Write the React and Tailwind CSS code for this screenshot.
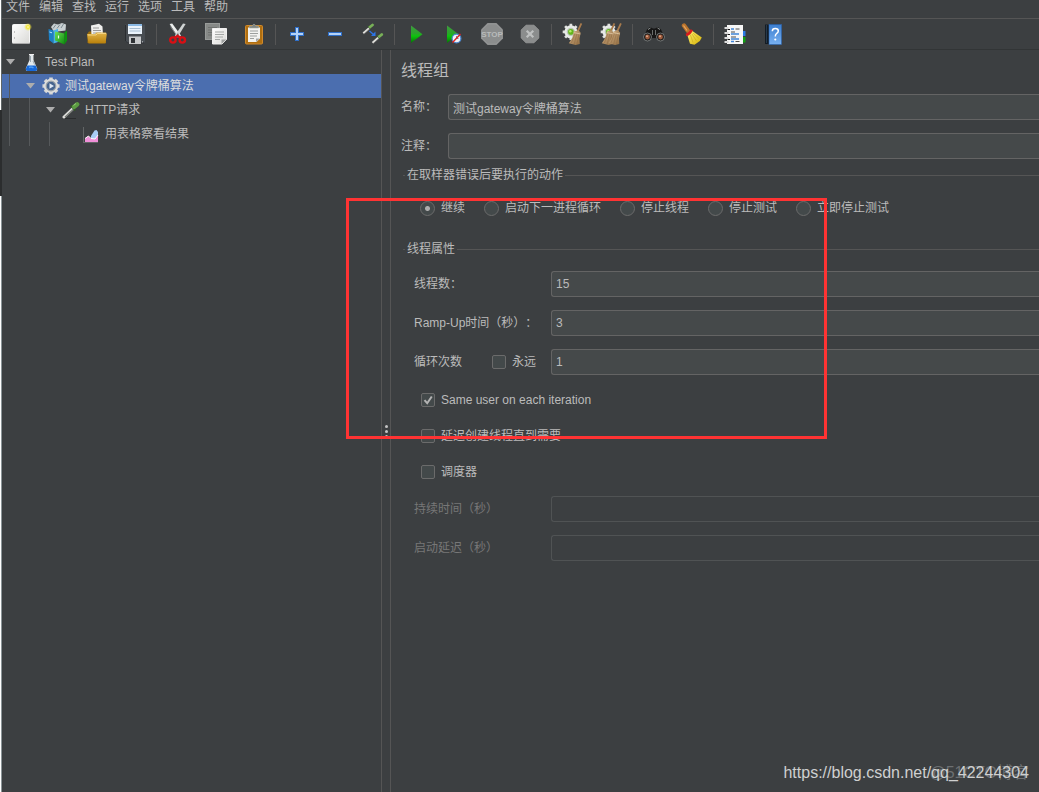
import React from "react";

const menus = ["文件", "编辑", "查找", "运行", "选项", "工具", "帮助"];

function Icon({ children }) {
  return (
    <svg width="22" height="22" viewBox="0 0 22 22" fill="none" aria-hidden="true">
      {children}
    </svg>
  );
}

function Gradients() {
  return (
    <svg width="0" height="0" className="absolute" aria-hidden="true">
      <defs>
        <linearGradient id="paper" x1="0" y1="0" x2="1" y2="1">
          <stop offset="0" stopColor="#ffffff" />
          <stop offset="1" stopColor="#d9d9d6" />
        </linearGradient>
        <linearGradient id="gold" x1="0" y1="0" x2="0" y2="1">
          <stop offset="0" stopColor="#e3b64a" />
          <stop offset="1" stopColor="#b87f0a" />
        </linearGradient>
        <linearGradient id="leaf" x1="0" y1="0" x2="1" y2="1">
          <stop offset="0" stopColor="#6fe05a" />
          <stop offset="1" stopColor="#0b8a0b" />
        </linearGradient>
        <linearGradient id="play" x1="0" y1="0" x2="0" y2="1">
          <stop offset="0" stopColor="#3f9a3f" />
          <stop offset="0.45" stopColor="#2aa52a" />
          <stop offset="0.6" stopColor="#0cc40c" />
          <stop offset="1" stopColor="#087008" />
        </linearGradient>
        <linearGradient id="sky" x1="0" y1="0" x2="0" y2="1">
          <stop offset="0" stopColor="#3c7fd0" />
          <stop offset="1" stopColor="#78b0f0" />
        </linearGradient>
        <linearGradient id="straw" x1="0" y1="0" x2="1" y2="1">
          <stop offset="0" stopColor="#d3b186" />
          <stop offset="1" stopColor="#8f6b40" />
        </linearGradient>
        <linearGradient id="brush" x1="0" y1="0" x2="1" y2="1">
          <stop offset="0" stopColor="#fff27a" />
          <stop offset="1" stopColor="#d4b000" />
        </linearGradient>
        <radialGradient id="glow">
          <stop offset="0" stopColor="#fffbd0" />
          <stop offset="0.35" stopColor="#f5e63c" />
          <stop offset="1" stopColor="#f5e63c" stopOpacity="0" />
        </radialGradient>
      </defs>
    </svg>
  );
}

const gearTeeth = "M11 1.5v19M1.5 11h19M4.3 4.3l13.4 13.4M17.7 4.3L4.3 17.7";

function SmallGear() {
  return (
    <g>
      <g transform="translate(-0.6 -0.6) scale(0.86)">
        <path d={gearTeeth} stroke="#dfe1df" strokeWidth="3.2" />
        <circle cx="11" cy="11" r="7.6" fill="#e8eae8" />
        <circle cx="11" cy="11" r="4.8" fill="#b9c4b4" />
      </g>
      <circle cx="8.9" cy="8.9" r="2.8" fill="#63b51c" />
      <circle cx="8.3" cy="8.2" r="1.2" fill="#b2ec6a" />
    </g>
  );
}

function BroomShape() {
  return (
    <g>
      <path d="M19.4 0.4L15.4 9" stroke="#a87b4d" strokeWidth="1.8" />
      <path d="M12 8.5l4.5-1.3 2.2 2.6-1.2 5.7.3 5.5-4.2 1-6.8-1.7 3.4-5.3z" fill="url(#straw)" />
      <path d="M13 10.5l-3.6 9.5M15 10.3l-2.8 10.8M17 11l-2 9.8" stroke="#8f6b42" strokeWidth="0.5" />
      <path d="M11.8 9.6l6.6 1.4" stroke="#ead2b0" strokeWidth="0.7" />
    </g>
  );
}

const icons = {
  new: (
    <Icon>
      <rect x="2.5" y="1.5" width="17" height="19" rx="1" fill="url(#paper)" stroke="#f4f4f4" />
      <path d="M3 20.5h16.5" stroke="#a9a9a9" />
      <path d="M4.5 8.5v1M4.5 14.5v1" stroke="#8f8f8f" />
      <circle cx="18" cy="4" r="4" fill="url(#glow)" />
    </Icon>
  ),
  templates: (
    <Icon>
      <path d="M3 4l3-3.5 4 1L14 0l4 1.5-.5 6L6 9z" fill="#c9d0d2" />
      <path d="M5 5.5L8 1.5M9 5.5l3-4M13 5l2.500-4" stroke="#7d8a90" />
      <path d="M.5 6l5 1.5v13L1 17z" fill="#1c7fc4" />
      <path d="M5.5 7.5L10 6v13l-4.500 1.500z" fill="#45b1ea" />
      <path d="M1.500 9l2.500.8" stroke="#bfe6fb" />
      <path d="M7 8.5l9.500 2v11L7 17.500z" fill="url(#leaf)" />
      <path d="M16.500 9.500l2.500-2v10l-2.500 4z" fill="#0c960c" />
      <path d="M10.500 12.500v3" stroke="#eaffea" strokeWidth="1.200" />
    </Icon>
  ),
  open: (
    <Icon>
      <path d="M1.5 10.5l1.500-2h4l1 1.500h12v10h-18.500z" fill="#9a6c0c" />
      <path d="M5 2.5L13 .8l3.500 2.700.5 9H5.500z" fill="#f0f0ee" />
      <path d="M7 5h6M7 7.5h8M7 10h8" stroke="#9a9a9a" />
      <path d="M1 11h8l1.500-1.500H20l.8 1.500-1.300 9.500H2.500z" fill="url(#gold)" />
      <path d="M2 12h8l1.500-1.500H20" stroke="#f8dd92" strokeWidth="0.8" />
    </Icon>
  ),
  save: (
    <Icon>
      <path d="M1 1.5h20v19H3L1 18.500z" fill="#484d52" />
      <path d="M1.5 2v16l2 2h17" stroke="#2a2d30" />
      <rect x="4" y="1" width="14" height="10" fill="#eaf3fb" />
      <rect x="4" y="1" width="14" height="2" fill="#8ab9e4" />
      <path d="M5.5 5.500h11M5.500 8h11" stroke="#a6bdd2" />
      <rect x="5" y="13.5" width="12" height="7.5" fill="#c8cacc" />
      <rect x="7" y="15" width="4" height="5" fill="#303336" />
      <path d="M18.500 18v1.500" stroke="#9da1a5" />
    </Icon>
  ),
  cut: (
    <Icon>
      <path d="M2.600 1l2.600-.4 8.800 12-2.600 2z" fill="#eceeee" />
      <path d="M18.600 1L16 .6l-8.200 12 2.600 2z" fill="#cfd3d3" />
      <path d="M3.500 3.500l6 8.500" stroke="#a9adad" strokeWidth="0.700" />
      <circle cx="10.800" cy="11.500" r="0.900" fill="#666" />
      <ellipse cx="5.900" cy="17" rx="2.700" ry="2.600" stroke="#d90f14" strokeWidth="2.400" />
      <ellipse cx="15.300" cy="17" rx="2.700" ry="2.600" stroke="#d90f14" strokeWidth="2.400" />
      <path d="M7.500 14.800l3.100-1.800 3.100 1.800" stroke="#d90f14" strokeWidth="2.400" />
    </Icon>
  ),
  copy: (
    <Icon>
      <rect x="0.500" y="0.500" width="14" height="16" fill="#868987" stroke="#989b99" />
      <path d="M3 4.500h9M3 7h9M3 9.500h4M3 12h4" stroke="#6e716f" />
      <path d="M7.500 5.500h14v11l-4.500 4.500H7.500z" fill="url(#paper)" stroke="#f0f0f0" />
      <path d="M10 9h9M10 11.500h9M10 14h8M10 16.500h5" stroke="#a5a8a6" />
      <path d="M16.500 21v-4.500h5z" fill="#a0a2a1" />
    </Icon>
  ),
  paste: (
    <Icon>
      <rect x="2.500" y="2.500" width="17" height="18.500" rx="1" fill="#b06f10" stroke="#d0892a" />
      <path d="M5 4.500h12v11L13.500 19H5z" fill="#f2f2f0" />
      <path d="M7 8h8M7 10.500h8M7 13h7M7 15.500h4" stroke="#9c9f9d" />
      <path d="M13 19v-3.500h4z" fill="#a5a7a6" />
      <path d="M6.500 5V3h2.500Q11-.5 13 3h2.500v2z" fill="#7f8580" stroke="#a2a7a3" strokeWidth="0.600" />
    </Icon>
  ),
  plus: (
    <Icon>
      <path d="M9 4h4v5h5v4h-5v5H9v-5H4V9h5z" fill="#2f6fc8" />
      <path d="M11 5v12M5 11h12" stroke="#b4d2f7" strokeWidth="2" />
    </Icon>
  ),
  minus: (
    <Icon>
      <rect x="4" y="9" width="14" height="4" fill="#2f6fc8" />
      <path d="M5 11h12" stroke="#b4d2f7" strokeWidth="2" />
    </Icon>
  ),
  toggle: (
    <Icon>
      <path d="M1.300 10.300l5.700-5" stroke="#deded9" strokeWidth="2" />
      <path d="M1.800 11.300l6-5.300" stroke="#6c6c6c" strokeWidth="0.600" />
      <path d="M5.800 2.800l3 3.200" stroke="#3f6a2c" />
      <path d="M8 4l2.500-2" stroke="#78b058" strokeWidth="2.800" strokeLinecap="round" />
      <path d="M10.500 19.800l5.700-5" stroke="#deded9" strokeWidth="2" />
      <path d="M11 20.800l6-5.300" stroke="#6c6c6c" strokeWidth="0.600" />
      <path d="M15 12.300l3 3.200" stroke="#3f6a2c" />
      <path d="M17.300 13.500l2.500-2" stroke="#78b058" strokeWidth="2.800" strokeLinecap="round" />
      <path d="M7.500 8l4 3.500" stroke="#2c75e8" strokeWidth="1.300" />
      <path d="M13.500 8.500v4.500H9z" fill="#2c75e8" />
    </Icon>
  ),
  start: (
    <Icon>
      <path d="M6 2.500L17.500 11.200 6 20z" fill="url(#play)" />
    </Icon>
  ),
  startNoTimers: (
    <Icon>
      <path d="M4 2.500L15.500 11.200 4 20z" fill="url(#play)" />
      <circle cx="13.500" cy="15.500" r="4.400" fill="#eef3fa" stroke="#4b86cc" strokeWidth="1.200" />
      <path d="M13.500 13v2.500h2" stroke="#58708c" strokeWidth="0.800" />
      <path d="M9.500 19.500l8-8.500" stroke="#e02020" strokeWidth="1.400" />
    </Icon>
  ),
  stop: (
    <Icon>
      <path d="M6.500 0h9L22 6.500v9L15.500 22h-9L0 15.500v-9z" fill="#8b8d8d" />
      <path d="M7 1h8l6 6v8l-6 6H7l-6-6V7z" stroke="#9a9c9c" strokeWidth="0.600" />
      <text x="11" y="14" textAnchor="middle" fontSize="8" fontWeight="700" fontFamily="Liberation Sans, sans-serif" fill="#b9bbbb">STOP</text>
    </Icon>
  ),
  shutdown: (
    <Icon>
      <path d="M7 2.200h8L19.800 7v8L15 19.800H7L2.200 15V7z" fill="#8b8d8d" stroke="#999b9b" strokeWidth="0.800" strokeLinejoin="round" />
      <path d="M7.700 7.700l6.600 6.600M14.300 7.700l-6.600 6.600" stroke="#bfc1c1" strokeWidth="2.200" />
    </Icon>
  ),
  clear: (
    <Icon>
      <SmallGear />
      <BroomShape />
    </Icon>
  ),
  clearAll: (
    <Icon>
      <SmallGear />
      <g transform="translate(-5 0)">
        <BroomShape />
      </g>
      <g transform="translate(1.500 0)">
        <BroomShape />
      </g>
    </Icon>
  ),
  search: (
    <Icon>
      <path d="M4 6.500l3-2.500 3 1.500h2l3-1.500 3 2.500 3.500 8-4 3.500-5-3h-3l-5 3-4-3.500z" fill="#161616" />
      <path d="M5 6.500l2.500-1.500M14.500 5l2.500 1.500" stroke="#8e9291" />
      <path d="M9.500 7v5M12.500 7v5" stroke="#8e9291" strokeWidth="0.700" />
      <circle cx="4.500" cy="14" r="4" fill="#1b1b1b" stroke="#858988" strokeWidth="0.800" />
      <circle cx="17.500" cy="14" r="4" fill="#1b1b1b" stroke="#858988" strokeWidth="0.800" />
      <circle cx="4.500" cy="14" r="2.400" fill="#9b5a3c" />
      <circle cx="17.500" cy="14" r="2.400" fill="#9b5a3c" />
      <circle cx="4" cy="13.300" r="1" fill="#e3aa8b" />
      <circle cx="17" cy="13.300" r="1" fill="#e3aa8b" />
    </Icon>
  ),
  resetSearch: (
    <Icon>
      <path d="M3 2.500l4 5.500" stroke="#b8732c" strokeWidth="4.400" strokeLinecap="round" />
      <path d="M2.500 2.500l3.500 5" stroke="#e8a863" strokeWidth="1.200" />
      <path d="M10 7l10.800 7.500-2 3.500-5.300 3.700-4.500-1L6.300 12z" fill="url(#brush)" />
      <path d="M9.500 12l2.500 7.500M11 11l4.500 7M12 10l6 5.500" stroke="#c9a817" strokeWidth="0.600" />
      <path d="M5 12Q9 11 10.800 6.800" stroke="#d81c1c" strokeWidth="2.600" />
    </Icon>
  ),
  functionHelper: (
    <Icon>
      <rect x="16" y="8" width="5.500" height="5" fill="#2c7be5" />
      <rect x="16" y="14" width="5.500" height="5.500" fill="#12a012" />
      <rect x="3" y="2" width="16" height="19" fill="#f7f7f7" />
      <path d="M7 6h3M7 11h8M7 16h8M7 18.500h3" stroke="#4286d8" strokeWidth="1.300" />
      <path d="M11.500 6h4M7 9h4M7 14h5M11.500 18.500h4" stroke="#3a3a3a" strokeWidth="0.900" />
      <path d="M.5 5h4M.5 10h4M.5 15h4M.5 19h4" stroke="#dcdcdc" strokeWidth="2" />
      <path d="M3.500 6.500h2.500M3.500 11.500h2.500M3.500 16.500h2.500" stroke="#1a1a1a" strokeWidth="1.200" />
    </Icon>
  ),
  help: (
    <Icon>
      <path d="M3 1.500h15.500V3L7 21H3z" fill="#141c24" />
      <path d="M4.500 2v18" stroke="#26394b" />
      <rect x="7" y="1.500" width="12.500" height="20" fill="url(#sky)" stroke="#2a64b0" strokeWidth="0.600" />
      <path d="M10.300 8.200q0-2.700 3-2.700t3 2.500q0 1.500-1.800 2.600-1.200.8-1.200 2.900" stroke="#fff" strokeWidth="1.500" />
      <circle cx="13.300" cy="16.500" r="1.100" fill="#fff" />
    </Icon>
  ),
};

const tools = [
  ["new", "新建"], ["templates", "模板"], ["open", "打开"], ["save", "保存"], null,
  ["cut", "剪切"], ["copy", "复制"], ["paste", "粘贴"], null,
  ["plus", "展开"], ["minus", "折叠"], ["toggle", "切换"], null,
  ["start", "启动"], ["startNoTimers", "不停顿启动"], ["stop", "停止"], ["shutdown", "关闭"], null,
  ["clear", "清除"], ["clearAll", "清除全部"], null,
  ["search", "查找"], ["resetSearch", "重置查找"], null,
  ["functionHelper", "函数助手"], ["help", "帮助"],
];

const FlaskIcon = (
  <svg width="18" height="20" viewBox="0 0 18 20" fill="none" aria-hidden="true">
    <path d="M7.500 3h4v5l3.700 8.500q.3 2.500-1.700 2.500H5.500q-2 0-1.700-2.500L7.500 8z" fill="#e3e9ec" />
    <path d="M5.300 13.500h8.400l1.500 3.500q0 2-1.700 2H5.500q-1.700 0-1.700-2z" fill="#1668d8" />
    <path d="M7 15.500q2.500-1 4.500.5" stroke="#4f9df5" strokeWidth="1.500" />
    <path d="M7 2.500h5" stroke="#f0f0f0" />
    <path d="M8.500 4v6M11 9l1.500 3.500" stroke="#9aa7b0" />
  </svg>
);

const GearIcon = (
  <svg width="18" height="18" viewBox="1 1 20 20" fill="none" aria-hidden="true">
    <path d={gearTeeth} stroke="#d8d8d6" strokeWidth="4" />
    <circle cx="11" cy="11" r="8" fill="#dededc" />
    <circle cx="11" cy="11" r="5.400" fill="#46648e" stroke="#9aa2aa" strokeWidth="1.200" />
    <path d="M9.300 8l5 3-5 3z" fill="#dfe8f5" />
  </svg>
);

const DropperIcon = (
  <svg width="18" height="18" viewBox="0 0 18 18" fill="none" aria-hidden="true">
    <path d="M1 17.500h13" stroke="#2b2d2e" />
    <path d="M2 16L11 7.500" stroke="#dededb" strokeWidth="3" strokeLinecap="round" />
    <path d="M3 16.300L11.500 8.300" stroke="#70746f" strokeWidth="1.200" />
    <path d="M8.800 4.500l4.400 5" stroke="#2f5b22" strokeWidth="1.800" />
    <path d="M12.200 5.800l3-2.500" stroke="#5c9c42" strokeWidth="4.400" strokeLinecap="round" />
    <path d="M11.500 4.500l2.500-2" stroke="#98cc7c" />
  </svg>
);

const ChartIcon = (
  <svg width="18" height="18" viewBox="0 0 18 18" fill="none" aria-hidden="true">
    <path d="M1.500 2v15M1 17.500h15" stroke="#6c6f70" strokeWidth="0.800" />
    <path d="M9 11l3.500-5.500 2-.5 1.500 2v8H9z" fill="#a9cdf5" />
    <path d="M3 17v-3.500l3.500-2.500L9 13.500l4 .5 3-4v7z" fill="#f08fd8" />
    <path d="M3 13.500L6.500 11 9 13.500l4 .5 3-4" stroke="#fff" />
  </svg>
);

const tree = [
  { label: "Test Plan", icon: FlaskIcon, open: true },
  { label: "测试gateway令牌桶算法", icon: GearIcon, open: true, selected: true },
  { label: "HTTP请求", icon: DropperIcon, open: true },
  { label: "用表格察看结果", icon: ChartIcon },
];

function TreeRow({ node, level }) {
  return (
    <li
      role="treeitem"
      aria-selected={!!node.selected}
      className={node.selected ? "flex h-6 items-center bg-[#4b6eaf] text-[#dddddd]" : "flex h-6 items-center"}
    >
      {Array.from({ length: level }, (_, i) => (
        <span key={i} className="flex h-full w-5 shrink-0 pl-[7px]">
          <span className="w-px bg-[#56595b]" />
        </span>
      ))}
      <span className="flex w-5 shrink-0 pl-1">
        {node.open && (
          <svg width="9" height="6" viewBox="0 0 9 6" aria-hidden="true">
            <path d="M0 0h9L4.500 5.500z" fill="#adadad" />
          </svg>
        )}
      </span>
      <span className="flex w-[18px] shrink-0 justify-center">{node.icon}</span>
      <span className="pl-[5px] whitespace-nowrap">{node.label}</span>
    </li>
  );
}

const fieldClass =
  "h-[26px] min-w-0 flex-1 rounded-l-[3px] border border-r-0 border-[#646464] bg-[#45494a] px-1 text-[#bbbbbb] outline-none disabled:border-[#505354] disabled:bg-transparent";

function Radio({ label, checked }) {
  return (
    <label className="flex items-center gap-[6px] whitespace-nowrap">
      <input
        type="radio"
        name="onError"
        defaultChecked={checked}
        className="size-[15px] shrink-0 appearance-none rounded-full border border-[#6b6b6b] bg-[#43494a] checked:bg-[radial-gradient(circle,#adadad_2px,#43494a_3px)]"
      />
      {label}
    </label>
  );
}

function Check({ label, checked }) {
  return (
    <label className="flex h-[14px] items-center gap-[6px] whitespace-nowrap">
      <span className="grid size-[14px] shrink-0">
        <input
          type="checkbox"
          defaultChecked={checked}
          className="peer col-start-1 row-start-1 size-[14px] appearance-none rounded-[2px] border border-[#6b6b6b] bg-[#43494a]"
        />
        <svg viewBox="0 0 14 14" fill="none" aria-hidden="true" className="pointer-events-none invisible col-start-1 row-start-1 size-[14px] peer-checked:visible">
          <path d="M3.500 7.200l2.700 3L10.800 3.500" stroke="#b4b4b4" strokeWidth="2" />
        </svg>
      </span>
      {label}
    </label>
  );
}

function PropertyRow({ id, label, value, disabled, extra }) {
  return (
    <div className="flex items-center">
      <div className="flex w-[137px] shrink-0 items-center justify-between pr-[15px]">
        <label htmlFor={id} className={disabled ? "whitespace-nowrap text-[#777777]" : "whitespace-nowrap"}>
          {label}
        </label>
        {extra}
      </div>
      <input id={id} type="text" defaultValue={value} disabled={disabled} className={fieldClass} />
    </div>
  );
}

export default function App() {
  return (
    <div className="relative flex min-h-screen overflow-hidden bg-[#3c3f41] font-['Liberation_Sans','Noto_Sans_CJK_SC',sans-serif] text-[12px] leading-[15px] text-[#bbbbbb] [text-spacing-trim:space-all]">
      <Gradients />
      <div className="flex w-[2px] shrink-0 flex-col">
        <div className="h-[110px] border-r border-[#5f6668] bg-white" />
        <div className="h-[86px] bg-[#2b2d2e]" />
        <div className="flex-1 border-r border-[#8b9598] bg-white" />
      </div>

      <div className="flex min-w-0 flex-1 flex-col">
        <nav className="flex h-[19px] gap-[9px] border-b border-[#555555] pl-1">
          {menus.map((m) => (
            <button key={m} type="button" className="h-[15px]">
              {m}
            </button>
          ))}
        </nav>

        <div role="toolbar" className="flex h-[31px] items-center border-b border-[#323536]">
          {tools.map((t, i) =>
            t ? (
              <button key={i} type="button" aria-label={t[1]} className="flex w-[38px] shrink-0 justify-center">
                {icons[t[0]]}
              </button>
            ) : (
              <span key={i} className="flex w-[5px] shrink-0 justify-center">
                <span className="h-[21px] w-px bg-[#555555]" />
              </span>
            )
          )}
        </div>

        <div className="flex flex-1">
          <aside className="w-[380px] shrink-0 border-r border-[#555555]">
            <ul role="tree">
              {tree.map((n, i) => (
                <TreeRow key={n.label} node={n} level={i} />
              ))}
            </ul>
          </aside>

          <div className="flex w-[9px] shrink-0 flex-col items-center gap-[2px] border-r border-[#555555] pt-[375px]">
            <span className="size-[3px] rounded-full bg-[#c4c4c4]" />
            <span className="size-[3px] rounded-full bg-[#c4c4c4]" />
            <span className="size-[3px] rounded-full bg-[#c4c4c4]" />
          </div>

          <main className="min-w-0 flex-1 pt-[9px] pl-[10px]">
            <h1 className="text-[16px] leading-6">线程组</h1>

            <div className="mt-[11px] flex flex-col gap-[13px]">
              <div className="flex items-center">
                <label htmlFor="name" className="w-[47px] shrink-0">名称：</label>
                <input id="name" type="text" defaultValue="测试gateway令牌桶算法" className={fieldClass} />
              </div>
              <div className="flex items-center">
                <label htmlFor="comment" className="w-[47px] shrink-0">注释：</label>
                <input id="comment" type="text" className={fieldClass} />
              </div>
            </div>

            <fieldset className="mt-2 ml-[2px] min-w-0 border-t border-[#555555]">
              <legend className="ml-[2px] px-[2px] leading-[17px]">在取样器错误后要执行的动作</legend>
              <div className="flex gap-[19px] pt-[17px] pl-[17px]">
                <Radio label="继续" checked />
                <Radio label="启动下一进程循环" />
                <Radio label="停止线程" />
                <Radio label="停止测试" />
                <Radio label="立即停止测试" />
              </div>
            </fieldset>

            <fieldset className="mt-[25px] ml-[2px] min-w-0 border-t border-[#555555]">
              <legend className="ml-[2px] px-[2px] leading-[17px]">线程属性</legend>
              <div className="flex flex-col gap-[13px] pt-[13px] pl-[11px]">
                <PropertyRow id="threads" label="线程数：" value="15" />
                <PropertyRow id="ramp" label="Ramp-Up时间（秒）：" value="3" />
                <PropertyRow id="loops" label="循环次数" value="1" extra={<Check label="永远" />} />
              </div>
              <div className="flex flex-col items-start gap-[22px] pt-[18px] pl-[18px]">
                <Check label="Same user on each iteration" checked />
                <Check label="延迟创建线程直到需要" />
                <Check label="调度器" />
              </div>
              <div className="flex flex-col gap-[13px] pt-[17px] pl-[11px]">
                <PropertyRow id="duration" label="持续时间（秒）" disabled />
                <PropertyRow id="delay" label="启动延迟（秒）" disabled />
              </div>
            </fieldset>
          </main>
        </div>
      </div>

      <div className="pointer-events-none absolute top-[198px] left-[346px] h-[241px] w-[481px] border-3 border-[#ff3333]" />
      <div className="pointer-events-none absolute right-[10px] bottom-[10px] text-[16px] leading-[18px] whitespace-nowrap text-[#6d7072]">
        @51CTO博客
      </div>
      <div className="pointer-events-none absolute right-[10px] bottom-[10px] text-[16px] leading-[18px] whitespace-nowrap text-[#cfd0d0]">
        https://blog.csdn.net/qq_42244304
      </div>
    </div>
  );
}
